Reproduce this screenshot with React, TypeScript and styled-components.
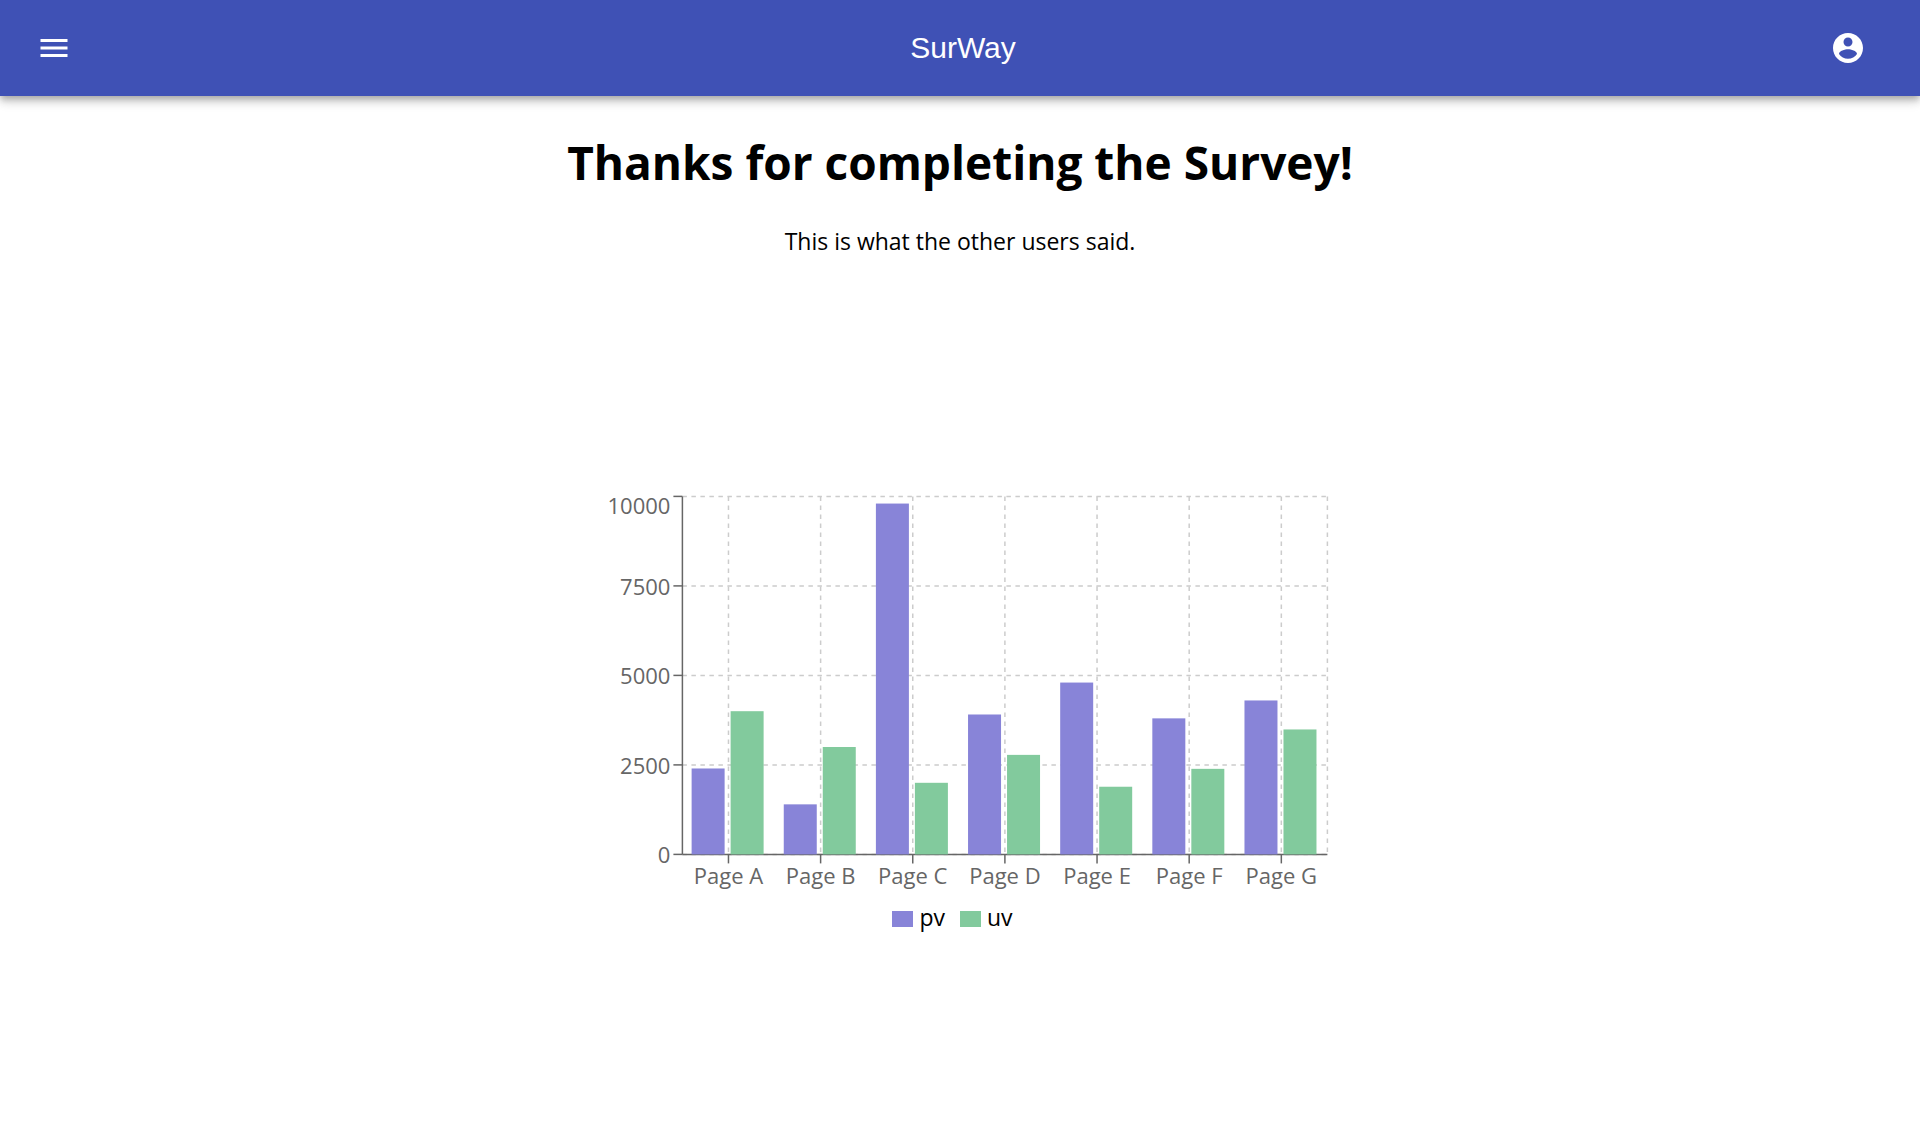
import React from "react";
import styled, { createGlobalStyle } from "styled-components";

const GlobalStyle = createGlobalStyle`
  body {
    margin: 0;
    background: #ffffff;
    color: #000000;
    font-family: "Segoe UI", "Open Sans", "Noto Sans", sans-serif;
    font-size: 23px;
    line-height: 32px;
  }
`;

const AppBar = styled.header`
  display: flex;
  align-items: center;
  min-height: 96px;
  padding: 0 36px 0 18px;
  box-sizing: border-box;
  background: #3f51b5;
  color: #ffffff;
  box-shadow:
    0 3px 6px -1px rgba(0, 0, 0, 0.2),
    0 6px 8px 0 rgba(0, 0, 0, 0.14),
    0 2px 15px 0 rgba(0, 0, 0, 0.12);
`;

const IconButton = styled.button<{ $gap?: number }>`
  display: flex;
  margin: 0 ${(p) => p.$gap ?? 0}px 0 0;
  padding: 18px;
  border: 0;
  border-radius: 50%;
  background: transparent;
  color: inherit;
  cursor: pointer;

  svg {
    width: 36px;
    height: 36px;
    fill: currentColor;
  }
`;

const Brand = styled.div`
  flex: 1;
  font-family: Arial, "Liberation Sans", sans-serif;
  font-size: 30px;
  line-height: 48px;
  text-align: center;
`;

const Main = styled.main`
  display: flex;
  flex-direction: column;
  align-items: center;
  padding: 34px 24px 0;
  text-align: center;
`;

const Heading = styled.h1`
  margin: 0;
  font-size: 46px;
  line-height: 64px;
`;

const Intro = styled.p`
  margin: 31px 0 0;
`;

const ChartFigure = styled.figure`
  width: 100%;
  max-width: 740px;
  margin: 233px 0 0;
`;

const Plot = styled.svg`
  display: block;
  width: 100%;
  height: auto;
`;

const GridLine = styled.line`
  stroke: #cccccc;
  stroke-width: 1.5;
  stroke-dasharray: 4.5 4.5;
`;

const AxisLine = styled.line`
  stroke: #666666;
  stroke-width: 1.5;
`;

const AxisLabel = styled.text`
  fill: #666666;
  font-size: 22px;
`;

const Legend = styled.ul`
  display: flex;
  justify-content: center;
  margin: 7px 0 0;
  padding: 0;
  list-style: none;
`;

const LegendItem = styled.li`
  display: flex;
  align-items: center;
  gap: 6px;
  margin-right: 15px;
`;

const Swatch = styled.span<{ $color: string }>`
  width: 21px;
  height: 16px;
  margin-top: 4px;
  background: ${(p) => p.$color};
`;

const data = [
  { name: "Page A", pv: 2400, uv: 4000 },
  { name: "Page B", pv: 1398, uv: 3000 },
  { name: "Page C", pv: 9800, uv: 2000 },
  { name: "Page D", pv: 3908, uv: 2780 },
  { name: "Page E", pv: 4800, uv: 1890 },
  { name: "Page F", pv: 3800, uv: 2390 },
  { name: "Page G", pv: 4300, uv: 3490 },
];

const series = [
  { key: "pv", color: "#8884d8" },
  { key: "uv", color: "#82ca9d" },
] as const;

const ticks = [0, 2500, 5000, 7500, 10000];

const left = 92.4;
const right = 737.4;
const top = 6.4;
const bottom = 364.4;
const band = (right - left) / data.length;
const barWidth = 33;
const barGap = 6;

const yOf = (value: number) => bottom - (value / 10000) * (bottom - top);
const centerOf = (index: number) => left + band * (index + 0.5);

function BarChart() {
  return (
    <ChartFigure>
      <Plot viewBox="0 0 740 404" role="img" aria-label="pv and uv by page">
        {ticks.map((t) => (
          <GridLine key={t} x1={left} x2={right} y1={yOf(t)} y2={yOf(t)} />
        ))}
        {data.map((d, i) => (
          <GridLine key={d.name} x1={centerOf(i)} x2={centerOf(i)} y1={top} y2={bottom} />
        ))}
        <GridLine x1={right} x2={right} y1={top} y2={bottom} />

        <AxisLine x1={left} x2={right} y1={bottom} y2={bottom} />
        {data.map((d, i) => (
          <g key={d.name}>
            <AxisLine x1={centerOf(i)} x2={centerOf(i)} y1={bottom} y2={bottom + 9} />
            <AxisLabel x={centerOf(i)} y={394} textAnchor="middle">
              {d.name}
            </AxisLabel>
          </g>
        ))}

        <AxisLine x1={left} x2={left} y1={top} y2={bottom} />
        {ticks.map((t) => (
          <g key={t}>
            <AxisLine x1={left - 9} x2={left} y1={yOf(t)} y2={yOf(t)} />
            <AxisLabel x={left - 12} y={Math.max(yOf(t) + 9, 24)} textAnchor="end">
              {t}
            </AxisLabel>
          </g>
        ))}

        {series.map((s, si) =>
          data.map((d, i) => (
            <rect
              key={s.key + d.name}
              x={left + band * (i + 0.1) + si * (barWidth + barGap)}
              y={yOf(d[s.key])}
              width={barWidth}
              height={bottom - yOf(d[s.key])}
              fill={s.color}
            />
          )),
        )}
      </Plot>
      <Legend>
        {series.map((s) => (
          <LegendItem key={s.key}>
            <Swatch $color={s.color} />
            {s.key}
          </LegendItem>
        ))}
      </Legend>
    </ChartFigure>
  );
}

export default function App() {
  return (
    <>
      <GlobalStyle />
      <AppBar>
        <IconButton type="button" aria-label="Menu" $gap={24}>
          <svg viewBox="0 0 24 24" aria-hidden="true">
            <path d="M3 18h18v-2H3v2zm0-5h18v-2H3v2zm0-7v2h18V6H3z" />
          </svg>
        </IconButton>
        <Brand>SurWay</Brand>
        <IconButton type="button" aria-label="Account">
          <svg viewBox="0 0 24 24" aria-hidden="true">
            <path d="M12 2C6.48 2 2 6.48 2 12s4.48 10 10 10 10-4.48 10-10S17.52 2 12 2zm0 3c1.66 0 3 1.34 3 3s-1.34 3-3 3-3-1.34-3-3 1.34-3 3-3zm0 14.2c-2.5 0-4.71-1.28-6-3.22.03-1.99 4-3.08 6-3.08 1.99 0 5.97 1.09 6 3.08-1.29 1.94-3.5 3.22-6 3.22z" />
          </svg>
        </IconButton>
      </AppBar>
      <Main>
        <Heading>Thanks for completing the Survey!</Heading>
        <Intro>This is what the other users said.</Intro>
        <BarChart />
      </Main>
    </>
  );
}
